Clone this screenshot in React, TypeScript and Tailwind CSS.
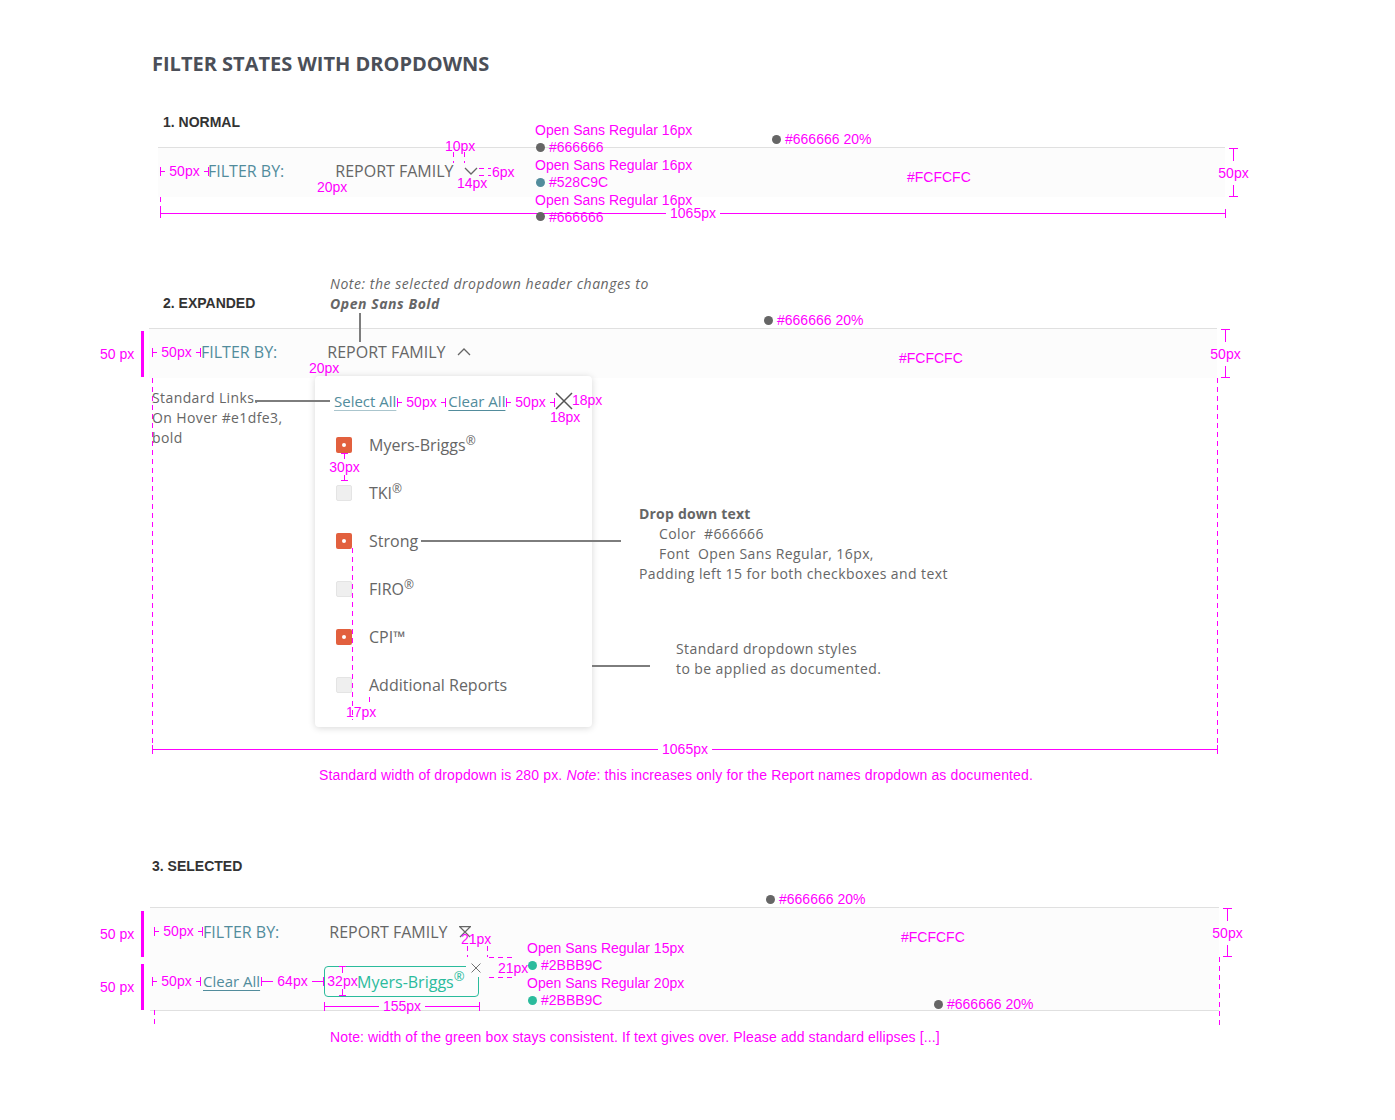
import React from "react";

const ANNO =
  "font-['Liberation_Sans',Arial,sans-serif] text-[14px] leading-[16px] text-[#ff00ff] whitespace-nowrap";

type Box = { className?: string; children?: React.ReactNode };

// magenta spec label, pinned on the canvas
function Tag({ className = "", children }: Box) {
  return <div className={`absolute ${ANNO} ${className}`}>{children}</div>;
}

// colour dot + label
function Swatch({ dot, label }: { dot: string; label: string }) {
  return (
    <div className="flex items-center gap-[4px] pl-px">
      <span className={`h-[9px] w-[9px] rounded-full ${dot}`} />
      {label}
    </div>
  );
}

// horizontal dimension |-- label --|
function Span({ className = "", label }: { className?: string; label: string }) {
  return (
    <div className={`absolute flex h-[16px] items-center ${ANNO} ${className}`}>
      <span className="h-[9px] w-px bg-[#ff00ff]" />
      <span className="h-px flex-1 bg-[#ff00ff]" />
      <span className="px-[4px]">{label}</span>
      <span className="h-px flex-1 bg-[#ff00ff]" />
      <span className="h-[9px] w-px bg-[#ff00ff]" />
    </div>
  );
}

// vertical dimension
function VSpan({ className = "", label }: { className?: string; label: string }) {
  return (
    <div className={`absolute flex w-[31px] flex-col items-center ${ANNO} ${className}`}>
      <span className="h-px w-[9px] bg-[#ff00ff]" />
      <span className="w-px flex-1 bg-[#ff00ff]" />
      <span className="py-[4px]">{label}</span>
      <span className="w-px flex-1 bg-[#ff00ff]" />
      <span className="h-px w-[9px] bg-[#ff00ff]" />
    </div>
  );
}

// "50 px" label with the thick bar marking a row height
function RowMark({ className = "" }: { className?: string }) {
  return (
    <div className={`absolute flex h-[46px] items-center gap-[7px] ${ANNO} ${className}`}>
      50 px
      <span className="h-full w-[3px] bg-[#ff00ff]" />
    </div>
  );
}

// T-shaped small vertical marker
function TMark({ className = "", label, h }: { className?: string; label: string; h: string }) {
  return (
    <div className={`absolute flex flex-col items-center ${ANNO} ${className}`}>
      <span className="h-px w-[7px] bg-[#ff00ff]" />
      <span className={`w-px bg-[#ff00ff] ${h}`} />
      <span>{label}</span>
      <span className={`w-px bg-[#ff00ff] ${h}`} />
      <span className="h-px w-[7px] bg-[#ff00ff]" />
    </div>
  );
}

function DashV({ className = "" }: { className?: string }) {
  return (
    <div
      className={`absolute w-px bg-[repeating-linear-gradient(to_bottom,#ff00ff_0_5px,transparent_5px_9px)] ${className}`}
    />
  );
}

function DashH({ className = "" }: { className?: string }) {
  return (
    <div
      className={`absolute h-px bg-[repeating-linear-gradient(to_right,#ff00ff_0_5px,transparent_5px_9px)] ${className}`}
    />
  );
}

function Rule({ className = "" }: { className?: string }) {
  return <div className={`absolute bg-[#7d7d7d] ${className}`} />;
}

function ChevronDown({ className = "" }: { className?: string }) {
  return (
    <svg width="14" height="8" viewBox="0 0 14 8" className={className}>
      <polyline points="1,1 7,7 13,1" fill="none" stroke="#666" strokeWidth="1.3" />
    </svg>
  );
}

function ChevronUp({ className = "" }: { className?: string }) {
  return (
    <svg width="14" height="8" viewBox="0 0 14 8" className={className}>
      <polyline points="1,7 7,1 13,7" fill="none" stroke="#666" strokeWidth="1.3" />
    </svg>
  );
}

function Close({ size, className = "" }: { size: number; className?: string }) {
  return (
    <svg width={size} height={size} viewBox="0 0 18 18" className={className}>
      <path d="M1 1 L17 17 M17 1 L1 17" stroke="#555" strokeWidth="1.5" fill="none" />
    </svg>
  );
}

function Check({ on }: { on: boolean }) {
  return on ? (
    <span className="flex h-[16px] w-[16px] shrink-0 items-center justify-center rounded-[2px] bg-[#e2603e]">
      <span className="h-[4px] w-[4px] rounded-full bg-white" />
    </span>
  ) : (
    <span className="h-[16px] w-[16px] shrink-0 rounded-[2px] border border-[#e4e4e4] bg-[#efefef]" />
  );
}

const ITEMS = [
  { label: "Myers-Briggs", reg: true, on: true },
  { label: "TKI", reg: true, on: false },
  { label: "Strong", reg: false, on: true },
  { label: "FIRO", reg: true, on: false },
  { label: "CPI™", reg: false, on: true },
  { label: "Additional Reports", reg: false, on: false },
];

const HEAD = "font-['Liberation_Sans',Arial,sans-serif] text-[14px] font-bold leading-[17px] text-[#333]";
const COPY = "absolute text-[14px] leading-[20px] tracking-[0.4px] text-[#666]";

export default function App() {
  return (
    <div className="relative h-[1120px] w-[1395px] overflow-hidden bg-white font-['Open_Sans',sans-serif]">
      {/* Title */}
      <div className="h-[100px] pl-[152px] pt-[50px] text-[20px] font-bold leading-[28px] text-[#4b4f58]">
        FILTER STATES WITH DROPDOWNS
      </div>

      {/* 1. Normal */}
      <section className="relative h-[170px]">
        <div className={`pl-[163px] pt-[14px] ${HEAD}`}>1. NORMAL</div>
        <div className="ml-[158px] mt-[16px] flex h-[50px] w-[1067px] items-center border-t border-[#e0e0e0] bg-[#fcfcfc] pb-[3px] pl-[50px] text-[16px]">
          <span className="text-[#528c9c]">FILTER BY:</span>
          <span className="ml-[51px] text-[#666]">REPORT FAMILY</span>
          <ChevronDown className="ml-[10px]" />
        </div>

        <Tag className="left-[445px] top-[38px]">10px</Tag>
        <DashV className="left-[453px] top-[52px] h-[11px]" />
        <DashV className="left-[464px] top-[52px] h-[11px]" />
        <DashH className="left-[479px] top-[68px] w-[12px]" />
        <DashH className="left-[479px] top-[75px] w-[12px]" />
        <Tag className="left-[492px] top-[64px]">6px</Tag>
        <Tag className="left-[457px] top-[75px]">14px</Tag>
        <Tag className="left-[317px] top-[79px]">20px</Tag>
        <Span className="left-[160px] top-[63px] w-[49px]" label="50px" />
        <DashV className="left-[160px] top-[97px] h-[13px]" />
        <Span className="left-[160px] top-[105px] w-[1066px]" label="1065px" />

        <Tag className="left-[535px] top-[22px] flex flex-col gap-[1.4px]">
          <span>Open Sans Regular 16px</span>
          <Swatch dot="bg-[#666666]" label="#666666" />
          <span>Open Sans Regular 16px</span>
          <Swatch dot="bg-[#528c9c]" label="#528C9C" />
          <span>Open Sans Regular 16px</span>
          <Swatch dot="bg-[#666666]" label="#666666" />
        </Tag>

        <Tag className="left-[771px] top-[31px]">
          <Swatch dot="bg-[#666666]" label="#666666 20%" />
        </Tag>
        <Tag className="left-[907px] top-[69px]">#FCFCFC</Tag>
        <VSpan className="left-[1218px] top-[48px] h-[49px]" label="50px" />
      </section>

      {/* 2. Expanded */}
      <section className="relative h-[570px]">
        <div className={`pl-[163px] pt-[25px] ${HEAD}`}>2. EXPANDED</div>
        <div className="ml-[149px] mt-[16px] flex h-[50px] w-[1068px] items-center border-t border-[#e0e0e0] bg-[#fcfcfc] pb-[3px] pl-[52px] text-[16px]">
          <span className="text-[#528c9c]">FILTER BY:</span>
          <span className="ml-[50px] text-[#666]">REPORT FAMILY</span>
          <ChevronUp className="ml-[11px]" />
        </div>

        {/* dropdown */}
        <div className="relative -mt-[2px] ml-[315px] h-[351px] w-[277px] rounded-[4px] bg-white pt-[14px] shadow-[0_1px_7px_rgba(0,0,0,0.16)]">
          <div className="flex h-[22px] items-center pl-[19px] text-[15px] text-[#528c9c]">
            <span className="underline decoration-[#aac5cd] underline-offset-[3px]">Select All</span>
            <span className="ml-[52px] underline decoration-[#528c9c] underline-offset-[3px]">Clear All</span>
            <Close size={18} className="ml-[50px]" />
          </div>
          <div className="mt-[9px]">
            {ITEMS.map((it) => (
              <div key={it.label} className="flex h-[48px] items-center pl-[21px]">
                <Check on={it.on} />
                <span className="ml-[17px] text-[16px] text-[#666]">
                  {it.label}
                  {it.reg && <sup className="text-[12px]">®</sup>}
                </span>
              </div>
            ))}
          </div>
        </div>

        <div className={`${COPY} left-[330px] top-[4px] italic tracking-[0.55px]`}>
          <div>Note: the selected dropdown header changes to</div>
          <div className="font-bold">Open Sans Bold</div>
        </div>
        <Rule className="left-[359px] top-[43px] h-[29px] w-[2px]" />

        <RowMark className="left-[100px] top-[61px]" />
        <Span className="left-[152px] top-[74px] w-[49px]" label="50px" />
        <Tag className="left-[309px] top-[90px]">20px</Tag>
        <Tag className="left-[763px] top-[42px]">
          <Swatch dot="bg-[#666666]" label="#666666 20%" />
        </Tag>
        <Tag className="left-[899px] top-[80px]">#FCFCFC</Tag>
        <VSpan className="left-[1210px] top-[59px] h-[49px]" label="50px" />

        <DashV className="left-[152px] top-[108px] h-[371px]" />
        <DashV className="left-[1217px] top-[108px] h-[371px]" />
        <Span className="left-[152px] top-[471px] w-[1066px]" label="1065px" />
        <Tag className="left-[319px] top-[497px] tracking-[0.14px]">
          Standard width of dropdown is 280 px. <i>Note</i>: this increases only for the Report names dropdown as documented.
        </Tag>

        <div className={`${COPY} left-[152px] top-[118px]`}>
          <div>Standard Links.</div>
          <div>On Hover #e1dfe3,</div>
          <div>bold</div>
        </div>
        <Rule className="left-[255px] top-[130px] h-[2px] w-[75px]" />

        <Span className="left-[397px] top-[124px] w-[49px]" label="50px" />
        <Span className="left-[506px] top-[124px] w-[49px]" label="50px" />
        <Tag className="left-[572px] top-[122px]">18px</Tag>
        <Tag className="left-[550px] top-[139px]">18px</Tag>

        <TMark className="left-[330px] top-[183px] w-[29px]" label="30px" h="h-[5px]" />

        <DashV className="left-[352px] top-[278px] h-[172px]" />
        <DashV className="left-[369px] top-[427px] h-[8px]" />
        <Tag className="left-[346px] top-[434px]">17px</Tag>

        <Rule className="left-[421px] top-[270px] h-[2px] w-[200px]" />
        <div className={`${COPY} left-[639px] top-[234px]`}>
          <div className="font-bold tracking-[0.2px]">Drop down text</div>
          <div className="pl-[20px]">Color&nbsp; #666666</div>
          <div className="pl-[20px]">Font&nbsp; Open Sans Regular, 16px,</div>
          <div>Padding left 15 for both checkboxes and text</div>
        </div>

        <Rule className="left-[592px] top-[395px] h-[2px] w-[58px]" />
        <div className={`${COPY} left-[676px] top-[369px]`}>
          <div>Standard dropdown styles</div>
          <div>to be applied as documented.</div>
        </div>
      </section>

      {/* 3. Selected */}
      <section className="relative h-[280px]">
        <div className={`pl-[152px] pt-[18px] ${HEAD}`}>3. SELECTED</div>
        <div className="ml-[150px] mt-[32px] w-[1069px] border-y border-[#e0e0e0] bg-[#fcfcfc] text-[16px]">
          <div className="flex h-[50px] items-center pb-[3px] pl-[53px]">
            <span className="text-[#528c9c]">FILTER BY:</span>
            <span className="ml-[50px] text-[#666]">REPORT FAMILY</span>
            <svg width="14" height="12" viewBox="0 0 14 12" className="ml-[10px]">
              <path d="M1 0.7 H13 M2 1 L12 11 M12 1 L2 11" fill="none" stroke="#666" strokeWidth="1.2" />
            </svg>
          </div>
          <div className="flex h-[52px] items-start pl-[53px] pt-[8px]">
            <span className="text-[15px] leading-[31px] text-[#528c9c] underline decoration-[#528c9c] underline-offset-[3px]">
              Clear All
            </span>
            <div className="relative ml-[64px] flex h-[31px] w-[155px] items-center rounded-[4px] border border-[#2bbb9c] pl-[32px] text-[16px] text-[#2bbb9c]">
              <span className="whitespace-nowrap">
                Myers-Briggs<sup className="text-[13px]">®</sup>
              </span>
              <span className="absolute -top-[2px] left-[141px] h-[12px] w-[16px] bg-[#fcfcfc]" />
              <Close size={10} className="absolute -top-[4px] left-[146px]" />
            </div>
          </div>
        </div>

        <RowMark className="left-[100px] top-[71px]" />
        <RowMark className="left-[100px] top-[124px]" />
        <Tag className="left-[765px] top-[51px]">
          <Swatch dot="bg-[#666666]" label="#666666 20%" />
        </Tag>
        <Span className="left-[154px] top-[83px] w-[49px]" label="50px" />
        <Span className="left-[152px] top-[133px] w-[49px]" label="50px" />
        <Span className="left-[261px] top-[133px] w-[63px]" label="64px" />

        <TMark className="left-[327px] top-[126px] w-[31px]" label="32px" h="h-[6px]" />

        <Tag className="left-[461px] top-[91px]">21px</Tag>
        <DashV className="left-[467px] top-[106px] h-[11px]" />
        <DashV className="left-[487px] top-[106px] h-[11px]" />
        <DashH className="left-[489px] top-[117px] w-[26px]" />
        <Tag className="left-[498px] top-[120px]">21px</Tag>
        <DashH className="left-[489px] top-[137px] w-[26px]" />

        <Tag className="left-[527px] top-[100px] flex flex-col gap-[1.4px]">
          <span>Open Sans Regular 15px</span>
          <Swatch dot="bg-[#2bbb9c]" label="#2BBB9C" />
          <span>Open Sans Regular 20px</span>
          <Swatch dot="bg-[#2bbb9c]" label="#2BBB9C" />
        </Tag>

        <Tag className="left-[901px] top-[89px]">#FCFCFC</Tag>
        <VSpan className="left-[1212px] top-[68px] h-[49px]" label="50px" />
        <Tag className="left-[933px] top-[156px]">
          <Swatch dot="bg-[#666666]" label="#666666 20%" />
        </Tag>

        <Span className="left-[324px] top-[158px] w-[156px]" label="155px" />
        <DashV className="left-[154px] top-[170px] h-[18px]" />
        <DashV className="left-[1219px] top-[117px] h-[71px]" />
        <Tag className="left-[330px] top-[189px] tracking-[0.12px]">
          Note: width of the green box stays consistent. If text gives over. Please add standard ellipses [...]
        </Tag>
      </section>
    </div>
  );
}
